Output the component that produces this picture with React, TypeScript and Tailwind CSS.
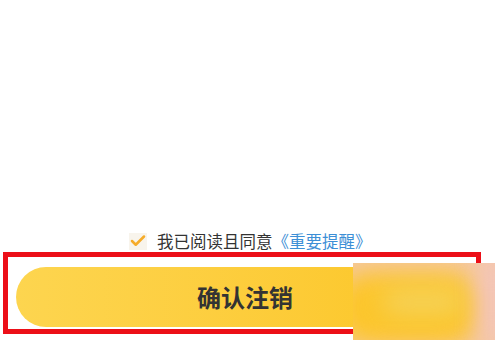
import { Check } from 'lucide-react';

export default function App() {
    return (
        <div
            className="relative w-[495px] h-[340px] bg-white flex flex-col justify-end pb-[6px] overflow-hidden"
            style={{ fontFamily: '"Noto Sans CJK SC", "Noto Sans", sans-serif' }}
        >
            {/* Agreement */}
            <div className="flex items-center ml-[129px] mb-[2px] h-[18px]">
                <div className="w-[18px] h-[17px] bg-[#f8f4ec] flex items-center justify-center">
                    <Check size={18} strokeWidth={3.4} className="text-[#f6ac2a]" />
                </div>
                <span className="ml-[10px] text-[16.5px] leading-none text-[#333333]">我已阅读且同意</span>
                <span className="text-[16.5px] leading-none text-[#3d8fd6]">《重要提醒》</span>
            </div>

            {/* Highlighted button */}
            <div className="ml-[3px] w-[478px] h-[82px] border-[5px] border-[#ec0f18] pt-[10px] pl-[8px] pr-[6px]">
                <button className="w-full h-[60px] rounded-full bg-gradient-to-r from-[#fdd54f] to-[#fcc521] flex items-center justify-center">
                    <span className="text-[24px] font-bold text-[#333333] pl-[4px]">确认注销</span>
                </button>
            </div>

            {/* Blurred watermark */}
            <div className="absolute left-[353px] top-[263px] w-[142px] h-[77px] bg-[#f5c9a6] overflow-hidden">
                <div className="absolute left-[-20px] top-[8px] w-[150px] h-[75px] rounded-[40px] bg-[#fcc62c] blur-md" />
                <div className="absolute left-[30px] top-[28px] w-[80px] h-[22px] rounded-full bg-[#f4d35e] blur-md" />
                <div className="absolute right-[-10px] top-0 w-[25px] h-[77px] bg-[#f3c4c0] blur-md" />
            </div>
        </div>
    );
}
